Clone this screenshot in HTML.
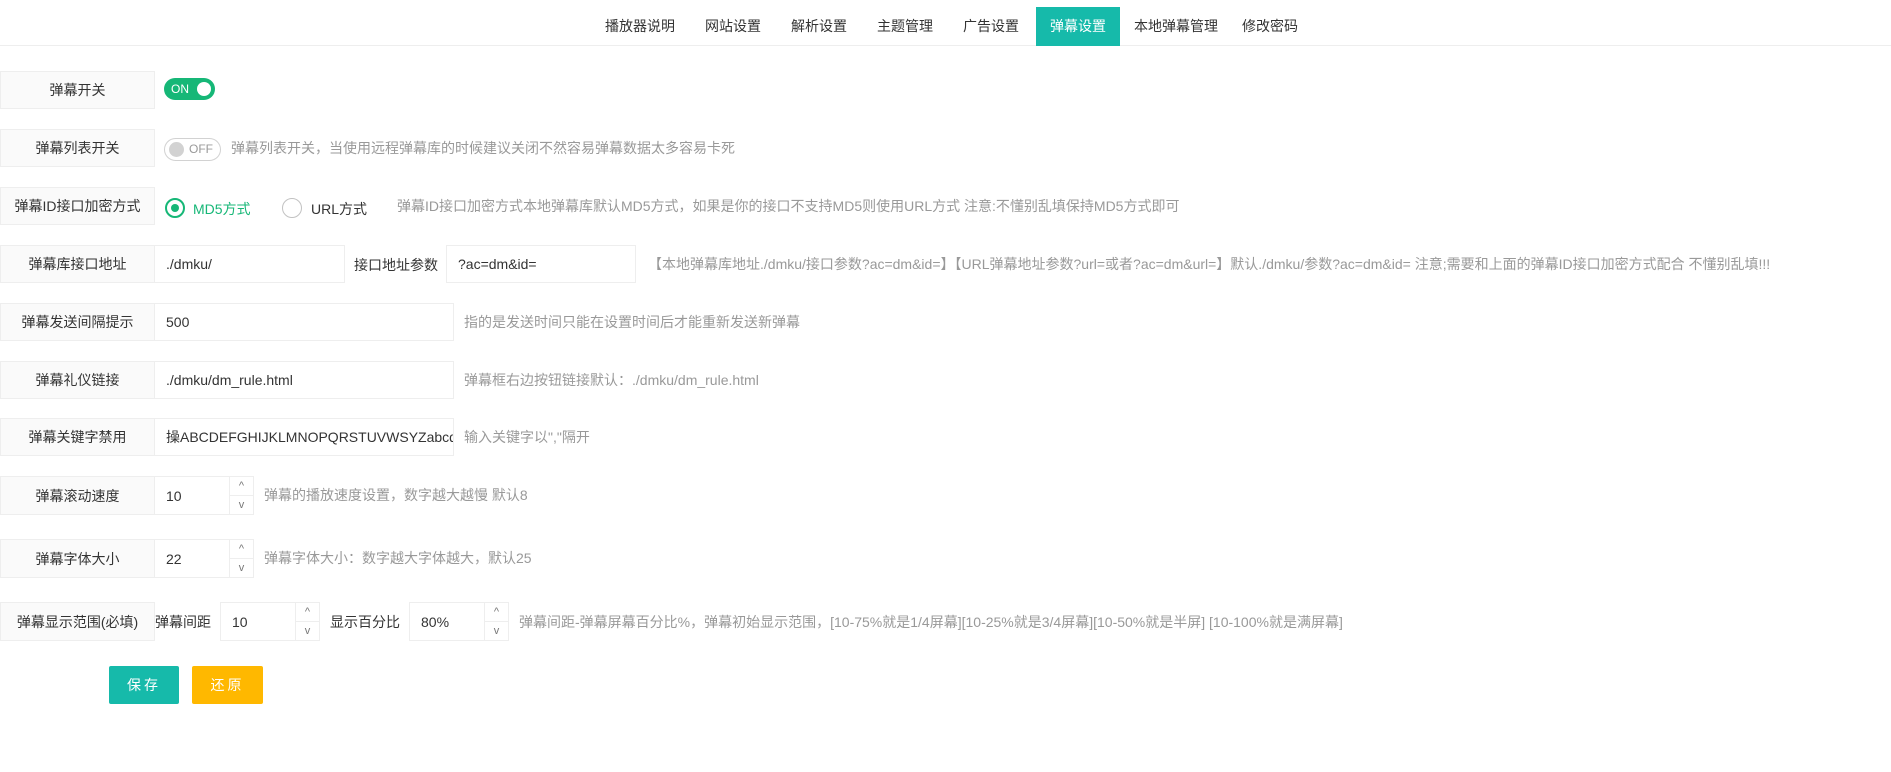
<!DOCTYPE html>
<html><head><meta charset="utf-8"><style>
*{box-sizing:border-box;margin:0;padding:0}
body{width:1891px;height:772px;background:#fff;font-family:"Liberation Sans","Noto Sans CJK SC",sans-serif;font-size:14px;color:#333;position:relative;overflow:hidden}
.nav{position:absolute;left:0;top:0;width:1891px;height:46px;border-bottom:1px solid #eee}
.tab{position:absolute;top:7px;height:39px;line-height:39px;font-size:14px;color:#333;text-align:center}
.tab.on{background:#16baaa;color:#fff}
.lab{position:absolute;left:0;width:155px;background:#fafafa;border:1px solid #eee;text-align:center;font-size:14px;color:#333;display:flex;align-items:center;justify-content:center}
.inp{position:absolute;border:1px solid #eee;background:#fff;padding-left:11px;display:flex;align-items:center;font-size:14px;color:#333;overflow:hidden;white-space:nowrap}
.help{position:absolute;color:#999;font-size:14px;white-space:nowrap}
.txt{position:absolute;font-size:14px;color:#333;white-space:nowrap}
.spin{position:absolute;right:0;top:0;bottom:0;width:24px;border-left:1px solid #eee;font-size:11px;color:#777}
.spin div{height:50%;display:flex;align-items:center;justify-content:center}
.spin div:first-child{border-bottom:1px solid #eee}
.btn{position:absolute;top:666px;height:38px;line-height:38px;color:#fff;text-align:center;font-size:14px;letter-spacing:3px;border-radius:2px}
</style></head><body>
<div class="nav">
<div class="tab" style="left:595px;width:90px">播放器说明</div>
<div class="tab" style="left:695px;width:76px">网站设置</div>
<div class="tab" style="left:781px;width:76px">解析设置</div>
<div class="tab" style="left:867px;width:76px">主题管理</div>
<div class="tab" style="left:953px;width:76px">广告设置</div>
<div class="tab on" style="left:1036px;width:84px">弹幕设置</div>
<div class="tab" style="left:1126px;width:100px">本地弹幕管理</div>
<div class="tab" style="left:1232px;width:76px">修改密码</div>
</div>

<div class="lab" style="top:71px;height:38px">弹幕开关</div>
<div style="position:absolute;left:164px;top:78px;width:51px;height:22px;border-radius:11px;background:#16b777;color:#fff;font-size:12px;line-height:22px;padding-left:7px">ON<span style="position:absolute;right:4px;top:4px;width:14px;height:14px;border-radius:50%;background:#fff"></span></div>

<div class="lab" style="top:129px;height:38px">弹幕列表开关</div>
<div style="position:absolute;left:164px;top:138px;width:57px;height:23px;border-radius:12px;border:1px solid #d2d2d2;color:#999;font-size:12px;line-height:21px;padding-left:24px">OFF<span style="position:absolute;left:4px;top:3px;width:15px;height:15px;border-radius:50%;background:#d2d2d2"></span></div>
<div class="help" style="left:231px;top:138px">弹幕列表开关，当使用远程弹幕库的时候建议关闭不然容易弹幕数据太多容易卡死</div>

<div class="lab" style="top:187px;height:38px">弹幕ID接口加密方式</div>
<div style="position:absolute;left:165px;top:198px;width:20px;height:20px;border-radius:50%;border:2px solid #16b777"><span style="position:absolute;left:4px;top:4px;width:8px;height:8px;border-radius:50%;background:#16b777"></span></div>
<div class="txt" style="left:193px;top:199px;color:#16b777">MD5方式</div>
<div style="position:absolute;left:282px;top:198px;width:20px;height:20px;border-radius:50%;border:1px solid #c2c2c2"></div>
<div class="txt" style="left:311px;top:199px">URL方式</div>
<div class="help" style="left:397px;top:196px">弹幕ID接口加密方式本地弹幕库默认MD5方式，如果是你的接口不支持MD5则使用URL方式 注意:不懂别乱填保持MD5方式即可</div>

<div class="lab" style="top:245px;height:38px">弹幕库接口地址</div>
<div class="inp" style="left:154px;top:245px;width:191px;height:38px">./dmku/</div>
<div class="txt" style="left:354px;top:255px">接口地址参数</div>
<div class="inp" style="left:446px;top:245px;width:190px;height:38px">?ac=dm&amp;id=</div>
<div class="help" style="left:648px;top:254px">【本地弹幕库地址./dmku/接口参数?ac=dm&amp;id=】【URL弹幕地址参数?url=或者?ac=dm&amp;url=】默认./dmku/参数?ac=dm&amp;id= 注意;需要和上面的弹幕ID接口加密方式配合 不懂别乱填!!!</div>

<div class="lab" style="top:303px;height:38px">弹幕发送间隔提示</div>
<div class="inp" style="left:154px;top:303px;width:300px;height:38px">500</div>
<div class="help" style="left:464px;top:312px">指的是发送时间只能在设置时间后才能重新发送新弹幕</div>

<div class="lab" style="top:361px;height:38px">弹幕礼仪链接</div>
<div class="inp" style="left:154px;top:361px;width:300px;height:38px">./dmku/dm_rule.html</div>
<div class="help" style="left:464px;top:370px">弹幕框右边按钮链接默认：./dmku/dm_rule.html</div>

<div class="lab" style="top:418px;height:38px">弹幕关键字禁用</div>
<div class="inp" style="left:154px;top:418px;width:300px;height:38px">操ABCDEFGHIJKLMNOPQRSTUVWSYZabcdefghijklmn</div>
<div class="help" style="left:464px;top:427px">输入关键字以","隔开</div>

<div class="lab" style="top:476px;height:39px">弹幕滚动速度</div>
<div class="inp" style="left:154px;top:476px;width:100px;height:39px">10<div class="spin"><div>^</div><div>v</div></div></div>
<div class="help" style="left:264px;top:485px">弹幕的播放速度设置，数字越大越慢 默认8</div>

<div class="lab" style="top:539px;height:39px">弹幕字体大小</div>
<div class="inp" style="left:154px;top:539px;width:100px;height:39px">22<div class="spin"><div>^</div><div>v</div></div></div>
<div class="help" style="left:264px;top:548px">弹幕字体大小：数字越大字体越大，默认25</div>

<div class="lab" style="top:602px;height:39px">弹幕显示范围(必填)</div>
<div class="txt" style="left:155px;top:612px">弹幕间距</div>
<div class="inp" style="left:220px;top:602px;width:100px;height:39px">10<div class="spin"><div>^</div><div>v</div></div></div>
<div class="txt" style="left:330px;top:612px">显示百分比</div>
<div class="inp" style="left:409px;top:602px;width:100px;height:39px">80%<div class="spin"><div>^</div><div>v</div></div></div>
<div class="help" style="left:519px;top:612px">弹幕间距-弹幕屏幕百分比%，弹幕初始显示范围，[10-75%就是1/4屏幕][10-25%就是3/4屏幕][10-50%就是半屏] [10-100%就是满屏幕]</div>

<div class="btn" style="left:109px;width:70px;background:#16baaa">保存</div>
<div class="btn" style="left:192px;width:71px;background:#ffb800">还原</div>
</body></html>
